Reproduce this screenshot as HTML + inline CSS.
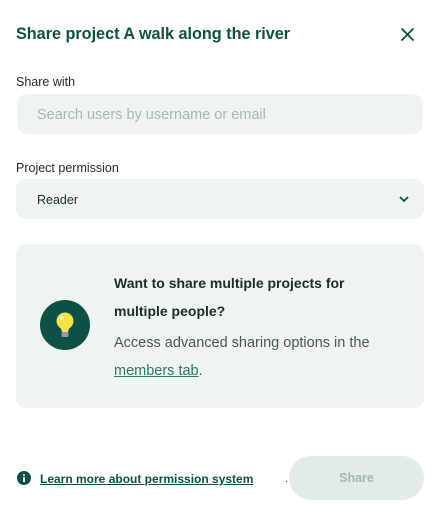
<!DOCTYPE html>
<html><head><style>
*{margin:0;padding:0;box-sizing:border-box}
body{width:438px;height:507px;background:#fff;font-family:"Liberation Sans",sans-serif;position:relative;overflow:hidden;color:#1d2b27}
.a{position:absolute}
</style></head><body>
<div class="a" style="left:16px;top:25px;font-size:16.2px;font-weight:bold;color:#0d5045;white-space:nowrap">Share project A walk along the river</div>
<svg class="a" style="left:400px;top:27px" width="15" height="15" viewBox="0 0 15 15"><path d="M1.5 1.5L13.5 13.5M13.5 1.5L1.5 13.5" stroke="#0d5045" stroke-width="1.8" fill="none"/></svg>
<div class="a" style="left:16px;top:75px;font-size:12.5px;color:#1d2b27">Share with</div>
<div class="a" style="left:17px;top:94px;width:406px;height:40px;border-radius:10px;background:#eef4f1"></div>
<div class="a" style="left:37px;top:107px;font-size:14.5px;color:#a9b5b1">Search users by username or email</div>
<div class="a" style="left:16px;top:161px;font-size:12.5px;color:#1d2b27">Project permission</div>
<div class="a" style="left:16px;top:179px;width:408px;height:40px;border-radius:10px;background:#eef4f1"></div>
<div class="a" style="left:37px;top:193px;font-size:12.5px;color:#1d2b27">Reader</div>
<svg class="a" style="left:398px;top:195px" width="12" height="8" viewBox="0 0 12 8"><path d="M2 2L6 6L10 2" stroke="#0d5045" stroke-width="1.8" fill="none"/></svg>
<div class="a" style="left:16px;top:244px;width:408px;height:164px;border-radius:10px;background:#eef4f1"></div>
<div class="a" style="left:40px;top:300px;width:50px;height:50px;border-radius:50%;background:#0d5045"></div>
<svg class="a" style="left:53px;top:311px" width="24" height="28" viewBox="0 0 24 28"><circle cx="12" cy="10" r="8.5" fill="#f8e04a"/><path d="M7 15L9 21H15L17 15Z" fill="#f8e04a"/><rect x="8.5" y="21" width="7" height="5" rx="1" fill="#9a9a9a"/><circle cx="9" cy="7" r="2" fill="#fff6b0"/></svg>
<div class="a" style="left:114px;top:269px;font-size:14px;font-weight:bold;line-height:28px;color:#1d2b27;width:250px">Want to share multiple projects for multiple people?</div>
<div class="a" style="left:114px;top:329px;font-size:14.5px;line-height:28px;color:#4a5652;width:300px">Access advanced sharing options in the <span style="color:#2c7a66;text-decoration:underline">members tab</span>.</div>
<svg class="a" style="left:17px;top:471px" width="14" height="14" viewBox="0 0 14 14"><circle cx="7" cy="7" r="7" fill="#0d5045"/><rect x="6.1" y="6" width="1.8" height="5" fill="#fff"/><circle cx="7" cy="4" r="1" fill="#fff"/></svg>
<div class="a" style="left:40px;top:472px;font-size:12px;font-weight:bold;color:#0d5045;text-decoration:underline;white-space:nowrap">Learn more about permission system</div>
<div class="a" style="left:285px;top:471px;font-size:12px;color:#555">.</div>
<div class="a" style="left:289px;top:456px;width:135px;height:44px;border-radius:22px;background:#e3ebe8;color:#9fb9b0;font-size:12.5px;font-weight:bold;text-align:center;line-height:44px">Share</div>
</body></html>
